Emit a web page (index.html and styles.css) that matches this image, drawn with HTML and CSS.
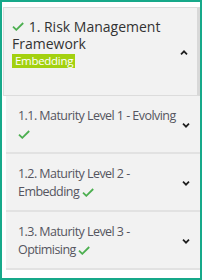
FILE: index.html
```html
<!DOCTYPE html>
<html>
<head>
<meta charset="utf-8">
<link rel="stylesheet" href="styles.css">
</head>
<body>
<div class="frame">
  <div class="head">
    <div class="head-text">
      <div class="title"><svg class="check" viewBox="0 0 12 9" width="12" height="9"><path d="M1 4.6 L4.3 7.8 L11.2 1" fill="none" stroke="#4caf50" stroke-width="1.8"/></svg> 1. Risk Management Framework</div>
      <div class="badge">Embedding</div>
    </div>
    <svg class="chev chev-up" viewBox="0 0 8 5" width="8" height="5"><path d="M1 4.3 L4 1.3 L7 4.3" fill="none" stroke="#1e1e1e" stroke-width="1.7"/></svg>
  </div>
  <div class="items">
    <div class="item">
      <div class="label">1.1. Maturity Level 1 - Evolving <svg class="check" viewBox="0 0 12 9" width="12" height="9"><path d="M1 4.6 L4.3 7.8 L11.2 1" fill="none" stroke="#4caf50" stroke-width="1.8"/></svg></div>
      <svg class="chev" viewBox="0 0 8 5" width="8" height="5"><path d="M1 0.7 L4 3.7 L7 0.7" fill="none" stroke="#1e1e1e" stroke-width="1.7"/></svg>
    </div>
    <div class="item">
      <div class="label">1.2. Maturity Level 2 - Embedding <svg class="check" viewBox="0 0 12 9" width="12" height="9"><path d="M1 4.6 L4.3 7.8 L11.2 1" fill="none" stroke="#4caf50" stroke-width="1.8"/></svg></div>
      <svg class="chev" viewBox="0 0 8 5" width="8" height="5"><path d="M1 0.7 L4 3.7 L7 0.7" fill="none" stroke="#1e1e1e" stroke-width="1.7"/></svg>
    </div>
    <div class="item">
      <div class="label">1.3. Maturity Level 3 - Optimising <svg class="check" viewBox="0 0 12 9" width="12" height="9"><path d="M1 4.6 L4.3 7.8 L11.2 1" fill="none" stroke="#4caf50" stroke-width="1.8"/></svg></div>
      <svg class="chev" viewBox="0 0 8 5" width="8" height="5"><path d="M1 0.7 L4 3.7 L7 0.7" fill="none" stroke="#1e1e1e" stroke-width="1.7"/></svg>
    </div>
  </div>
</div>
</body>
</html>
```
FILE: styles.css
```css
html, body {
  margin: 0;
  padding: 0;
  background: #ffffff;
}
.frame {
  width: 202px;
  height: 280px;
  box-sizing: border-box;
  border: 2px solid #17a98a;
  padding: 5px 0 0 1px;
  font-family: "Open Sans", "Liberation Sans", sans-serif;
}
.head {
  display: flex;
  align-items: flex-start;
  justify-content: space-between;
  background: #f2f2f2;
  border: 1px solid #dcdcdc;
  border-right: 3px solid #d8d8d8;
  padding: 10px 9px 27px 8px;
}
.head-text {
  width: 165px;
}
.title {
  font-size: 14px;
  line-height: 17px;
  font-weight: 500;
  color: #333333;
}
.title .check {
  vertical-align: 1px;
  margin-right: 1px;
}
.badge {
  width: fit-content;
  margin-top: 2px;
  background: #a3d10f;
  color: #ffffff;
  font-size: 11.5px;
  line-height: 14px;
  letter-spacing: -0.3px;
  padding: 0 2px 0 3px;
}
.chev-up {
  margin-top: 32px;
}
.items {
  margin-left: 3px;
}
.item {
  display: flex;
  align-items: center;
  justify-content: space-between;
  background: #f2f2f2;
  border-bottom: 2px solid #e2e2e2;
  padding: 11px 10px 9px 12px;
}
.label {
  width: 162px;
  font-size: 12.5px;
  line-height: 18px;
  letter-spacing: -0.55px;
  color: #555560;
}
.label .check {
  vertical-align: -1px;
}
.chev {
  flex: none;
}
```
